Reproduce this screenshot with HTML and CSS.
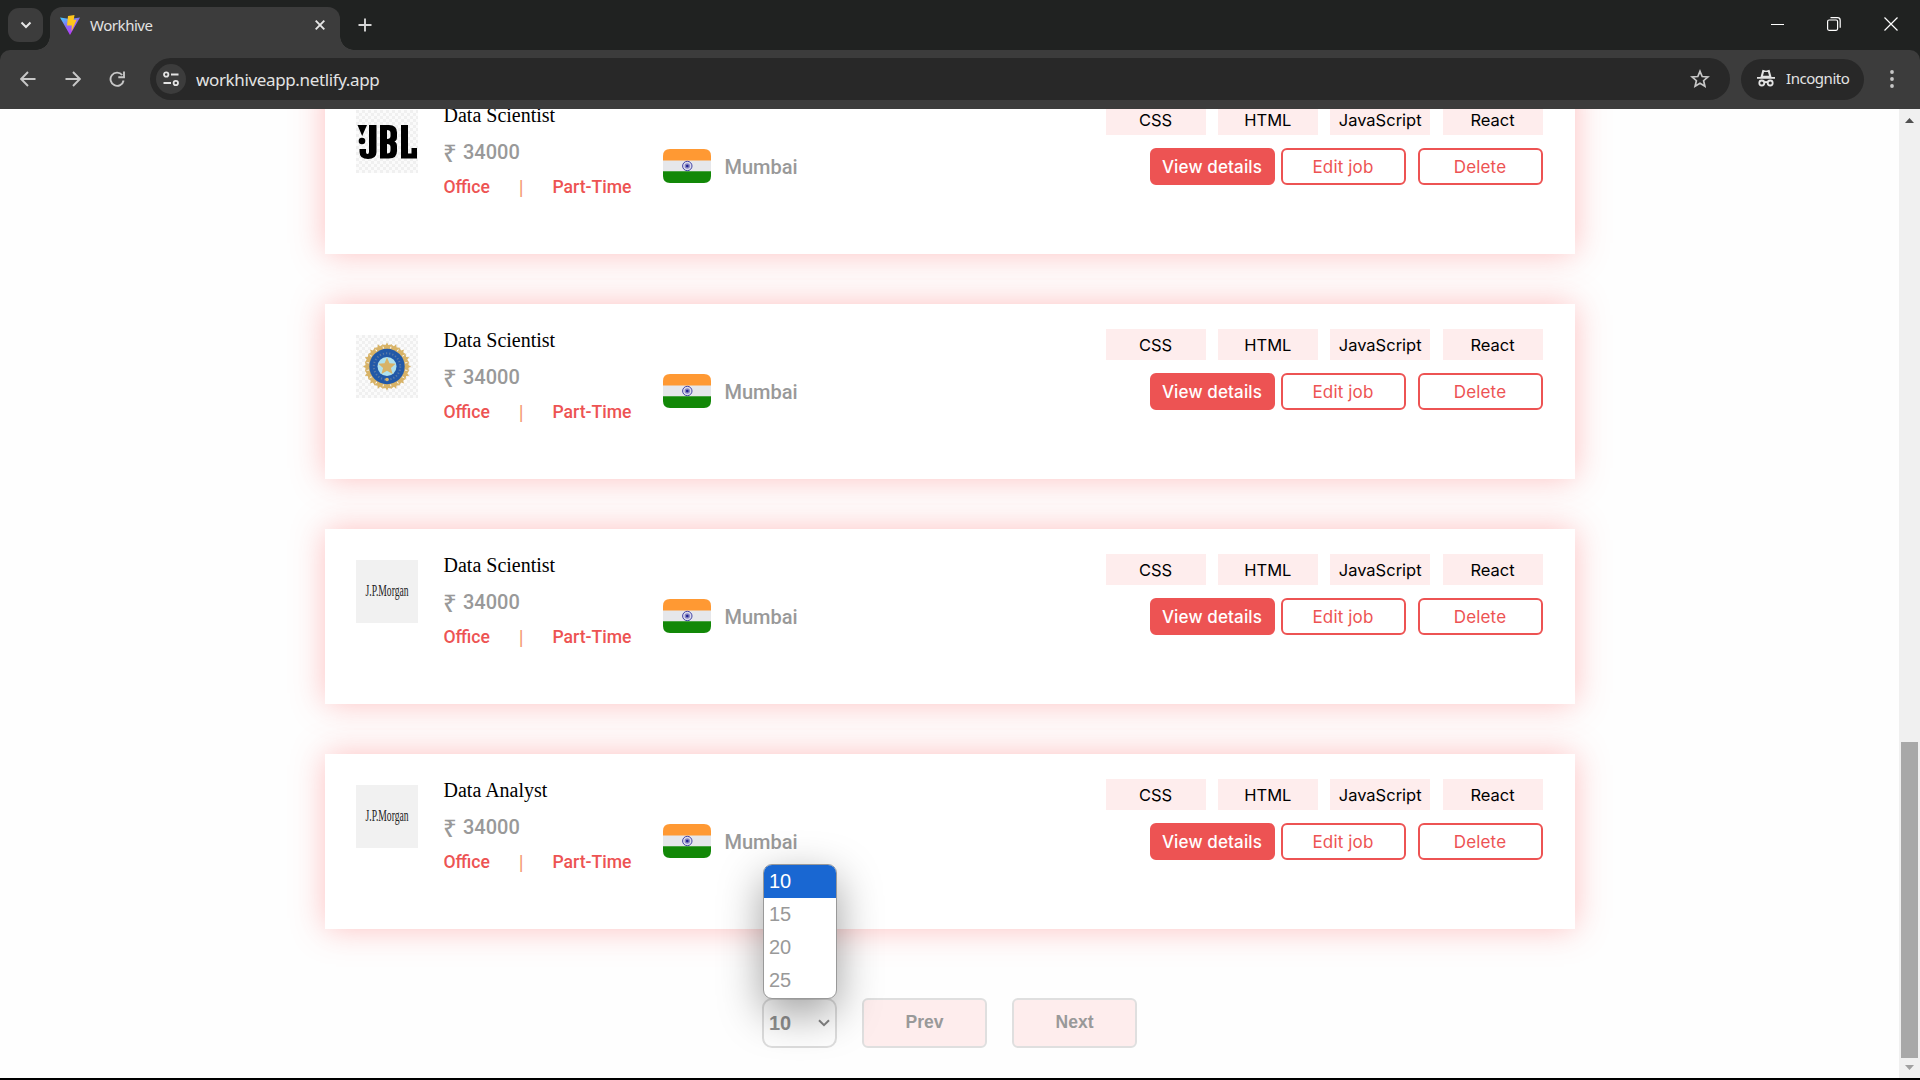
FILE: index.html
```html
<!DOCTYPE html>
<html lang="en">
<head>
<meta charset="utf-8">
<title>Workhive</title>
<link rel="stylesheet" href="styles.css">
</head>
<body>
<svg class="defs" width="0" height="0" aria-hidden="true">
  <defs>
    <pattern id="checks" width="6" height="6" patternUnits="userSpaceOnUse"><path fill="#fbfbfb" d="M0 0h6v6H0z"/><path fill="#f0f0f0" d="M0 0h3v3H0zM3 3h3v3H3z"/></pattern>
    <linearGradient id="vite" x1="0" y1="0" x2=".6" y2="1"><stop offset="0" stop-color="#41d1ff"/><stop offset=".5" stop-color="#8a6cf5"/><stop offset="1" stop-color="#bd34fe"/></linearGradient>
    <symbol id="flag" viewBox="0 0 48 34">
      <path fill="#ff9933" d="M0 12V7Q0 0 7 0h34q7 0 7 7v5z"/>
      <path fill="#e6e7ea" d="M0 11.500h48V22.500H0z"/>
      <path fill="#128807" d="M0 22.300v4.700q0 7 7 7h34q7 0 7-7v-4.700z"/>
      <circle cx="24.300" cy="17" r="4.700" fill="#dcdcec" stroke="#4545a5" stroke-width="1"/>
      <circle cx="24.300" cy="17" r="2.700" fill="#8585c4"/>
      <circle cx="24.300" cy="17" r="1.300" fill="#22228f"/>
    </symbol>
    <path id="spike" d="M0-24l1.400 2.600 3.400-.6-1.700 3.200.9 2.300h-8l.9-2.300-1.700-3.200 3.400.6z"/>
    <symbol id="jpm" viewBox="0 0 62 63">
      <path fill="#f1f1f1" d="M0 0h62v63H0z"/>
      <text x="9.500" y="35.500" class="jpm-text" textLength="43" lengthAdjust="spacingAndGlyphs">J.P.Morgan</text>
    </symbol>
  </defs>
</svg>

<header class="browser">
  <div class="tabstrip">
    <div class="tab-search"><svg width="12" height="8" viewBox="0 0 12 8"><path d="M1.500 1.500 6 6l4.500-4.500" fill="none" stroke="#e6e6e6" stroke-width="2"/></svg></div>
    <div class="tab">
      <svg width="20" height="20" viewBox="0 0 20 20"><path fill="url(#vite)" d="M0 2.500 10 4l10-1.500L10 20z"/><path fill="#ffc61c" d="M8 1l6.500-1-.8 5 3-.4-5.200 12 .3-6H7z"/></svg>
      <span class="tab-title">Workhive</span>
      <svg class="tab-close" width="10" height="10" viewBox="0 0 10 10"><path d="M.7.7l8.600 8.600M9.300.7.7 9.300" stroke="#e6e6e6" stroke-width="1.900"/></svg>
    </div>
    <svg class="new-tab" width="14" height="14" viewBox="0 0 14 14"><path d="M7 .5v13M.5 7h13" stroke="#d6d6d6" stroke-width="1.900"/></svg>
    <div class="window-controls">
      <svg width="13" height="14" viewBox="0 0 13 14"><path d="M0 7.500h13" stroke="#fff"/></svg>
      <svg width="14" height="14" viewBox="0 0 14 14"><rect x=".6" y="3" width="10" height="10.300" rx="1.500" fill="none" stroke="#fff" stroke-width="1.200"/><path d="M3.500.7h7q2.700 0 2.700 2.700v7.300" fill="none" stroke="#fff" stroke-width="1.200"/></svg>
      <svg width="14" height="14" viewBox="0 0 14 14"><path d="M.5.5l13 13M13.500.5l-13 13" stroke="#fff" stroke-width="1.200"/></svg>
    </div>
  </div>
  <div class="toolbar">
    <div class="nav-icons">
      <svg width="16" height="16" viewBox="0 0 16 16"><path d="M15.500 8H1.500M8 1 1.200 8 8 15" fill="none" stroke="#c7c7c7" stroke-width="1.900"/></svg>
      <svg width="16" height="16" viewBox="0 0 16 16"><path d="M.5 8h14M8 1l6.800 7L8 15" fill="none" stroke="#c7c7c7" stroke-width="1.900"/></svg>
      <svg width="16" height="16" viewBox="0 0 16 16"><path d="M13.200 4A6.600 6.600 0 1 0 14.600 9.500M15 .5v5.700H9.300" fill="none" stroke="#c7c7c7" stroke-width="1.900"/></svg>
    </div>
    <div class="omnibox">
      <span class="site-info"><svg width="16" height="16" viewBox="0 0 16 16"><g fill="none" stroke="#e3e3e3" stroke-width="1.800"><circle cx="3.200" cy="3.500" r="2.200"/><circle cx="12.800" cy="12" r="2.200"/><path d="M8 3.500h7.500M.5 12H8"/></g></svg></span>
      <span class="url">workhiveapp.netlify.app</span>
      <svg class="star" width="20" height="20" viewBox="0 0 20 20"><path d="M10 2.300l2.200 5.200 5.700.5-4.300 3.700 1.300 5.500-4.900-2.900-4.900 2.900 1.300-5.500L2.100 8l5.700-.5z" fill="none" stroke="#c7c7c7" stroke-width="1.700"/></svg>
    </div>
    <div class="incognito">
      <svg width="18" height="18" viewBox="0 0 18 18"><path fill="#e3e3e3" d="M0 8h18v1.800H0zM3.500 8l2-7.200 3.500.9 3.500-.9 2 7.200z"/><path fill="#282828" d="M6 6.700 7 3h4l1 3.700z"/><g fill="none" stroke="#e3e3e3" stroke-width="1.800"><circle cx="4.800" cy="14" r="2.500"/><circle cx="13.200" cy="14" r="2.500"/><path d="M7.300 13.500q1.700-1 3.400 0"/></g></svg>
      <span>Incognito</span>
    </div>
    <svg class="menu" width="4" height="18" viewBox="0 0 4 18"><g fill="#c7c7c7"><circle cx="2" cy="2" r="1.900"/><circle cx="2" cy="9" r="1.900"/><circle cx="2" cy="16" r="1.900"/></g></svg>
  </div>
</header>

<div class="viewport">
  <main class="page">
    <section class="jobs">
      <article class="card">
        <svg class="logo" width="62" height="63" viewBox="0 0 62 63"><path fill="url(#checks)" d="M0 0h62v63H0z"/><path d="M1.500 15H11L6.200 26z"/><circle cx="6" cy="31" r="3.300"/><path d="M13 15h7.500v27q0 7-8.500 7-8.500 0-8.500-7v-3H10v3q0 2 1.500 2t1.500-2z"/><path fill-rule="evenodd" d="M24 15h9q8 0 8 7.500V27q0 3.500-2.500 4.500 2.500 1 2.500 5V41q0 7.500-8 7.500h-9zM31 20v9q3.500 0 3.500-3v-3q0-3-3.500-3zM31 34v9.500q3.500 0 3.500-3.500v-3q0-3-3.500-3z"/><path d="M45 15h7v28.500h3.500V38H61v10.500H45z"/></svg>
        <div class="info">
          <div class="title">Data Scientist</div>
          <div class="salary"><span class="rupee">₹</span>34000</div>
          <div class="kind"><span>Office</span><i class="bar">|</i><span>Part-Time</span></div>
        </div>
        <div class="place"><svg width="48" height="34"><use href="#flag"/></svg><span>Mumbai</span></div>
        <div class="side">
          <div class="tags"><span>CSS</span><span>HTML</span><span>JavaScript</span><span>React</span></div>
          <div class="actions"><button class="btn solid">View details</button><button class="btn edit">Edit job</button><button class="btn">Delete</button></div>
        </div>
      </article>
      <article class="card">
        <svg class="logo" width="62" height="63" viewBox="0 0 62 63"><path fill="url(#checks)" d="M0 0h62v63H0z"/>
          <g transform="translate(31 31.500)">
            <g fill="#d8b367"><use href="#spike"/><use href="#spike" transform="rotate(22.500)"/><use href="#spike" transform="rotate(45)"/><use href="#spike" transform="rotate(67.500)"/><use href="#spike" transform="rotate(90)"/><use href="#spike" transform="rotate(112.500)"/><use href="#spike" transform="rotate(135)"/><use href="#spike" transform="rotate(157.500)"/><use href="#spike" transform="rotate(180)"/><use href="#spike" transform="rotate(202.500)"/><use href="#spike" transform="rotate(225)"/><use href="#spike" transform="rotate(247.500)"/><use href="#spike" transform="rotate(270)"/><use href="#spike" transform="rotate(292.500)"/><use href="#spike" transform="rotate(315)"/><use href="#spike" transform="rotate(337.500)"/></g>
            <circle r="17.700" fill="#2259a8"/>
            <circle r="13.200" fill="none" stroke="#5c7aa4" stroke-width="2" stroke-dasharray="1.200 2"/>
            <circle r="9.500" fill="#b0e2ee"/>
            <circle cy="13" r="1.800" fill="#d8b367"/>
            <path fill="#d8b367" d="M0-9l2.500 5.700 6.200.5-4.800 4.200 1.700 6.200L0 4.300l-5.600 3.300 1.700-6.200-4.800-4.200 6.200-.5z"/>
          </g>
        </svg>
        <div class="info">
          <div class="title">Data Scientist</div>
          <div class="salary"><span class="rupee">₹</span>34000</div>
          <div class="kind"><span>Office</span><i class="bar">|</i><span>Part-Time</span></div>
        </div>
        <div class="place"><svg width="48" height="34"><use href="#flag"/></svg><span>Mumbai</span></div>
        <div class="side">
          <div class="tags"><span>CSS</span><span>HTML</span><span>JavaScript</span><span>React</span></div>
          <div class="actions"><button class="btn solid">View details</button><button class="btn edit">Edit job</button><button class="btn">Delete</button></div>
        </div>
      </article>
      <article class="card">
        <svg class="logo" width="62" height="63"><use href="#jpm"/></svg>
        <div class="info">
          <div class="title">Data Scientist</div>
          <div class="salary"><span class="rupee">₹</span>34000</div>
          <div class="kind"><span>Office</span><i class="bar">|</i><span>Part-Time</span></div>
        </div>
        <div class="place"><svg width="48" height="34"><use href="#flag"/></svg><span>Mumbai</span></div>
        <div class="side">
          <div class="tags"><span>CSS</span><span>HTML</span><span>JavaScript</span><span>React</span></div>
          <div class="actions"><button class="btn solid">View details</button><button class="btn edit">Edit job</button><button class="btn">Delete</button></div>
        </div>
      </article>
      <article class="card">
        <svg class="logo" width="62" height="63"><use href="#jpm"/></svg>
        <div class="info">
          <div class="title">Data Analyst</div>
          <div class="salary"><span class="rupee">₹</span>34000</div>
          <div class="kind"><span>Office</span><i class="bar">|</i><span>Part-Time</span></div>
        </div>
        <div class="place"><svg width="48" height="34"><use href="#flag"/></svg><span>Mumbai</span></div>
        <div class="side">
          <div class="tags"><span>CSS</span><span>HTML</span><span>JavaScript</span><span>React</span></div>
          <div class="actions"><button class="btn solid">View details</button><button class="btn edit">Edit job</button><button class="btn">Delete</button></div>
        </div>
      </article>
    </section>
    <nav class="pager">
      <div class="select">
        <span>10</span>
        <svg width="12" height="8" viewBox="0 0 12 8"><path d="M1 1.200 6 6.200l5-5" fill="none" stroke="#858585" stroke-width="2"/></svg>
        <ul class="options"><li class="active">10</li><li>15</li><li>20</li><li>25</li></ul>
      </div>
      <button class="page-btn">Prev</button>
      <button class="page-btn">Next</button>
    </nav>
  </main>
  <aside class="scrollbar">
    <svg width="9" height="5" viewBox="0 0 9 5"><path fill="#505050" d="M0 5 4.500 0 9 5z"/></svg>
    <div class="thumb"></div>
    <svg width="9" height="5" viewBox="0 0 9 5"><path fill="#a0a0a0" d="M0 0l4.500 5L9 0z"/></svg>
  </aside>
</div>
</body>
</html>
```
FILE: styles.css
```css
* { box-sizing: border-box; }
body {
  margin: 0;
  width: 1920px;
  height: 1080px;
  overflow: hidden;
  background: #000;
  display: flex;
  flex-direction: column;
}
svg { display: block; flex: none; }
.defs { position: absolute; }
button { font: inherit; padding: 0; }

/* Browser frame */
.browser { height: 109px; flex: none; background: #202221; font-family: "Noto Sans", sans-serif; color: #e3e3e3; }
.tabstrip { height: 50px; display: flex; align-items: flex-start; padding-left: 8px; }
.tab-search { width: 35px; height: 34px; margin-top: 8px; border-radius: 11px; background: #3c3c3c; display: flex; align-items: center; justify-content: center; }
.tab {
  position: relative;
  width: 290px; height: 43px; margin: 7px 0 0 7px; padding: 0 15px 7px 10px;
  display: flex; align-items: center;
  background: #3c3c3c; border-radius: 12px 12px 0 0;
}
.tab::before, .tab::after { content: ""; position: absolute; bottom: 0; width: 14px; height: 14px; }
.tab::before { left: -14px; background: radial-gradient(circle at 0 0, transparent 13.500px, #3c3c3c 14px); }
.tab::after { right: -14px; background: radial-gradient(circle at 100% 0, transparent 13.500px, #3c3c3c 14px); }
.tab-title { margin-left: 10px; font-size: 15px; letter-spacing: -0.45px; line-height: 20px; }
.tab-close { margin-left: auto; }
.new-tab { margin: 18px 0 0 18px; }
.window-controls { display: flex; gap: 43px; margin: 17px 22px 0 auto; }
.toolbar { height: 59px; background: #3c3c3c; border-radius: 10px 10px 0 0; display: flex; align-items: center; padding: 0 26px 1px 20px; }
.nav-icons { display: flex; gap: 28.500px; width: 130px; }
.omnibox { width: 1580px; height: 42px; border-radius: 21px; background: #282828; display: flex; align-items: center; padding: 0 20px 0 6px; }
.site-info { width: 30px; height: 30px; border-radius: 50%; background: #3c3c3c; display: flex; align-items: center; justify-content: center; }
.url { margin-left: 10px; font-size: 17px; letter-spacing: -0.36px; }
.star { margin-left: auto; }
.incognito { width: 123px; height: 41px; margin-left: 11px; padding: 0 0 2px 16px; border-radius: 21px; background: #282828; display: flex; align-items: center; gap: 11px; font-size: 15px; letter-spacing: -0.45px; }
.menu { margin-left: auto; }

/* Page */
.viewport { height: 969px; display: flex; overflow: hidden; background: #fefefe; }
.page { flex: 1; display: flex; flex-direction: column; align-items: center; min-width: 0; }
.jobs { margin-top: -30px; display: flex; flex-direction: column; gap: 50px; }
.card {
  width: 1250px; height: 175px; flex: none;
  display: flex; align-items: flex-start;
  padding: 25px 32px 0 31px;
  background: #fff;
  box-shadow: 0 0 31px rgba(255, 82, 82, 0.36);
}
.logo { margin-top: 6px; }
.jpm-text { font: 400 16px "Liberation Serif", serif; fill: #222; }
.info { width: 219px; margin-left: 26px; font-family: Roboto, sans-serif; font-weight: 500; }
.title { font: 400 20px/23px "Liberation Serif", serif; color: #000; }
.salary { display: flex; margin-top: 13px; font-size: 20px; line-height: 24px; color: #999; }
.rupee { width: 20px; font: 500 24px/25px "Noto Sans", sans-serif; height: 24px; margin-left: -0.5px; }
.kind { display: flex; margin-top: 12px; font-size: 17.600px; line-height: 22px; color: #ed5353; }
.bar { width: 62.500px; padding-top: 1px; text-align: center; font-style: normal; font-weight: 400; font-size: 20px; color: #f59a72; }
.place { margin-top: 45px; display: flex; align-items: flex-start; gap: 14px; font: 500 20px/36px Roboto, sans-serif; color: #999; }
.side { margin-left: auto; font-family: Inter, sans-serif; display: flex; flex-direction: column; align-items: flex-end; gap: 13px; }
.tags { display: flex; gap: 12.330px; }
.tags span { width: 100px; height: 31px; line-height: 32px; background: #feeded; text-align: center; color: #000; font-size: 16.500px; }
.actions { display: flex; }
.btn { width: 125px; height: 37px; border: 2px solid #ed5353; border-radius: 6px; background: #fff; color: #ed5353; font-size: 17px; letter-spacing: 0.15px; }
.solid { background: #ed5353; color: #fff; font-weight: 500; }
.edit { margin: 0 12px 0 6px; }

/* Pagination */
.pager { display: flex; gap: 25px; margin-top: 69px; font-family: "Liberation Sans", sans-serif; color: #999; }
.select { position: relative; width: 75px; height: 50px; border: 2px solid #ddd; border-radius: 10px; padding: 0 5px; display: flex; align-items: center; justify-content: space-between; font-size: 20px; font-weight: 700; color: #909090; }
.options {
  position: absolute; left: -1px; bottom: 47px; width: 74px; height: 135px;
  margin: 0; padding: 0; list-style: none; overflow: hidden;
  border: 1px solid #999; border-radius: 9px; background: #fff;
  font-weight: 400; color: #999;
  box-shadow: 0 14px 44px rgba(0, 0, 0, 0.38);
}
.options li { height: 33px; line-height: 32px; padding-left: 5px; }
.options .active { background: #1967d2; color: #fff; }
.page-btn { width: 125px; height: 50px; border: 2px solid #dfdfdf; border-radius: 6px; background: #feeded; color: #999; font-size: 17.500px; font-weight: 700; padding-bottom: 2px; }

/* Scrollbar */
.scrollbar { width: 21px; background: #f0f0f0; display: flex; flex-direction: column; align-items: center; padding: 9px 0 8px; }
.thumb { width: 17px; height: 316px; margin: auto 0 7px; background: #a8a8a8; }
```
